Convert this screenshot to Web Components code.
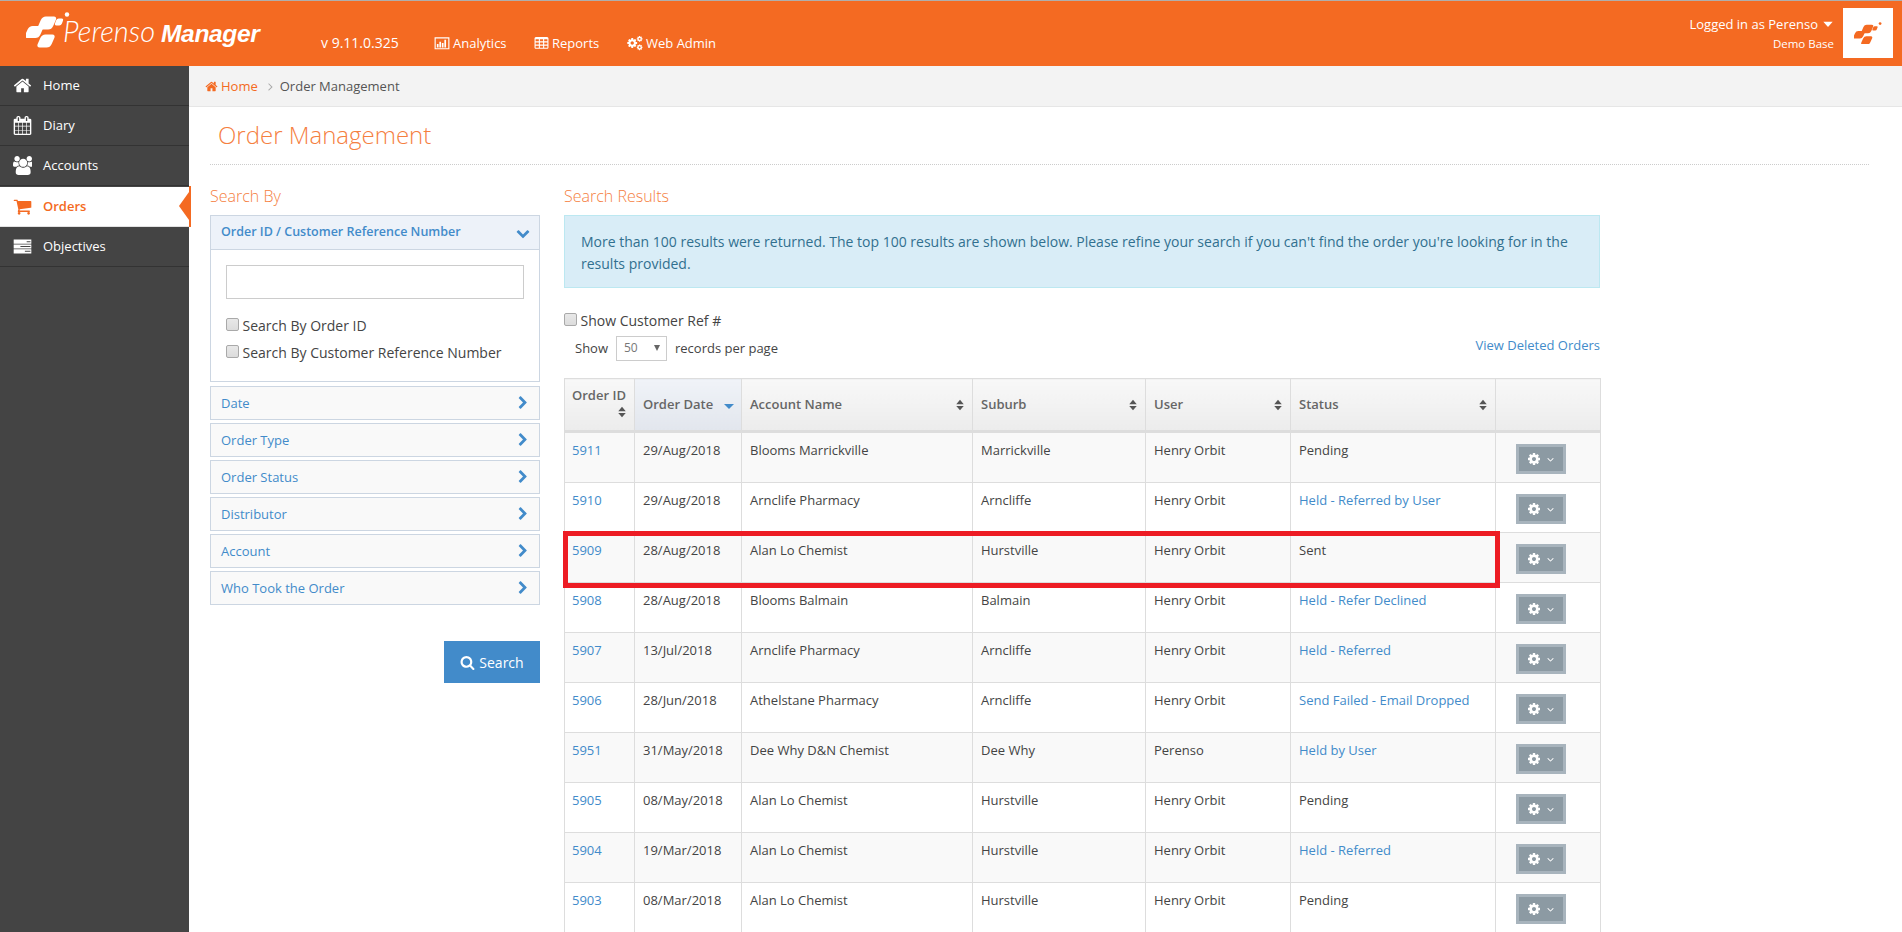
<!DOCTYPE html>
<html lang="en">
<head>
<meta charset="utf-8">
<title>Order Management</title>
<style>
  html, body { margin: 0; height: 100%; overflow: hidden; background: #fff; }
  body { font: 13px/18.5px "Open Sans", "Liberation Sans", sans-serif; color: #333; }
</style>
</head>
<body>
<pm-app></pm-app>
<script>
const COG = 'M1152 896q0-106-75-181t-181-75-181 75-75 181 75 181 181 75 181-75 75-181zm512-109v222q0 12-8 23t-20 13l-185 28q-19 54-39 91 35 50 107 138 10 12 10 25t-9 23q-27 37-99 108t-94 71q-12 0-26-9l-138-108q-44 23-91 38-16 136-29 186-7 28-36 28h-222q-14 0-24.500-8.500t-11.500-21.500l-28-184q-49-16-90-37l-141 107q-10 9-25 9-14 0-25-11-126-114-165-168-7-10-7-23 0-12 8-23 15-21 51-66.500t54-70.500q-27-50-41-99l-183-27q-13-2-21-12.500t-8-23.500v-222q0-12 8-23t19-13l186-28q14-46 39-92-40-57-107-138-10-12-10-24 0-10 9-23 26-36 98.500-107.500t94.500-71.500q13 0 26 10l138 107q44-23 91-38 16-136 29-186 7-28 36-28h222q14 0 24.500 8.500t11.500 21.500l28 184q49 16 90 37l142-107q9-9 24-9 13 0 25 10 129 119 165 170 7 8 7 22 0 12-8 23-15 21-51 66.500t-54 70.500q26 50 41 98l183 28q13 2 21 12.500t8 23.500z';

const ICONS = {
  home: '<path d="M1472 992v480q0 26-19 45t-45 19h-384v-384h-256v384h-384q-26 0-45-19t-19-45v-480q0-1 .5-3t.5-3l575-474 575 474q1 2 1 6zm223-69l-62 74q-8 9-21 11h-3q-13 0-21-7l-692-577-692 577q-12 8-24 7-13-2-21-11l-62-74q-8-10-7-23.500t11-21.500l719-599q32-26 76-26t76 26l244 204v-195q0-14 9-23t23-9h192q14 0 23 9t9 23v408l219 182q10 8 11 21.500t-7 23.500z"/>',
  calendar: '<path d="M192 1664h288v-288h-288v288zm352 0h320v-288h-320v288zm-352-352h288v-320h-288v320zm352 0h320v-320h-320v320zm-352-384h288v-288h-288v288zm736 736h320v-288h-320v288zm-384-736h320v-288h-320v288zm768 736h288v-288h-288v288zm-384-352h320v-320h-320v320zm-352-864v-288q0-13-9.500-22.500t-22.500-9.500h-64q-13 0-22.500 9.500t-9.500 22.500v288q0 13 9.500 22.500t22.500 9.500h64q13 0 22.500-9.500t9.500-22.500zm736 864h288v-320h-288v320zm-384-384h320v-288h-320v288zm384 0h288v-288h-288v288zm32-480v-288q0-13-9.500-22.500t-22.500-9.500h-64q-13 0-22.500 9.500t-9.500 22.500v288q0 13 9.500 22.500t22.500 9.500h64q13 0 22.500-9.500t9.500-22.500zm384-64v1280q0 52-38 90t-90 38h-1408q-52 0-90-38t-38-90v-1280q0-52 38-90t90-38h128v-96q0-66 47-113t113-47h64q66 0 113 47t47 113v96h384v-96q0-66 47-113t113-47h64q66 0 113 47t47 113v96h128q52 0 90 38t38 90z"/>',
  users: '<path d="M593 896q-162 5-265 128h-134q-82 0-138-40.500t-56-118.500q0-353 124-353 6 0 43.500 21t97.500 42.500 119 21.500q67 0 133-23-5 37-5 66 0 139 81 256zm1071 637q0 120-73 189.500t-194 69.500h-874q-121 0-194-69.500t-73-189.500q0-53 3.500-103.500t14-109 26.500-108.500 43-97.500 62-81 85.500-53.500 111.500-20q10 0 43 21.500t73 48 107 48 135 21.500 135-21.500 107-48 73-48 43-21.500q61 0 111.500 20t85.500 53.500 62 81 43 97.500 26.500 108.500 14 109 3.500 103.500zm-1024-1277q0 106-75 181t-181 75-181-75-75-181 75-181 181-75 181 75 75 181zm704 384q0 159-112.500 271.500t-271.500 112.500-271.500-112.500-112.500-271.500 112.500-271.500 271.500-112.500 271.500 112.500 112.500 271.500zm576 225q0 78-56 118.500t-138 40.500h-134q-103-123-265-128 81-117 81-256 0-29-5-66 66 23 133 23 59 0 119-21.500t97.500-42.500 43.500-21q124 0 124 353zm-128-609q0 106-75 181t-181 75-181-75-75-181 75-181 181-75 181 75 75 181z"/>',
  cart: '<path d="M704 1536q0 52-38 90t-90 38-90-38-38-90 38-90 90-38 90 38 38 90zm896 0q0 52-38 90t-90 38-90-38-38-90 38-90 90-38 90 38 38 90zm128-1088v512q0 24-16.500 42.500t-40.500 21.500l-1044 122q13 60 13 70 0 16-24 64h920q26 0 45 19t19 45-19 45-45 19h-1024q-26 0-45-19t-19-45q0-11 8-31.500t16-36 21.500-40 15.500-29.500l-177-823h-204q-26 0-45-19t-19-45 19-45 45-19h256q16 0 28.500 6.500t19.500 15.500 13 24.500 8 26 5.500 29.500 4.500 26h1201q26 0 45 19t19 45z"/>',
  tasks: '<path fill-rule="evenodd" d="M64 240h1664v400h-1664zM1290 390h360v100h-360zM64 696h1664v400h-1664zM700 846h950v100h-950zM64 1152h1664v400h-1664zM1120 1302h530v100h-530z"/>',
  chart: '<path fill-rule="evenodd" d="M64 256h1664v1344h-1664zM192 384v1088h1408v-1088zM320 1000h190v400h-190zM600 760h190v640h-190zM880 900h190v500h-190zM1160 520h190v880h-190z"/>',
  table: '<path d="M576 1376v-192q0-14-9-23t-23-9h-320q-14 0-23 9t-9 23v192q0 14 9 23t23 9h320q14 0 23-9t9-23zm0-384v-192q0-14-9-23t-23-9h-320q-14 0-23 9t-9 23v192q0 14 9 23t23 9h320q14 0 23-9t9-23zm512 384v-192q0-14-9-23t-23-9h-320q-14 0-23 9t-9 23v192q0 14 9 23t23 9h320q14 0 23-9t9-23zm-512-768v-192q0-14-9-23t-23-9h-320q-14 0-23 9t-9 23v192q0 14 9 23t23 9h320q14 0 23-9t9-23zm512 384v-192q0-14-9-23t-23-9h-320q-14 0-23 9t-9 23v192q0 14 9 23t23 9h320q14 0 23-9t9-23zm512 384v-192q0-14-9-23t-23-9h-320q-14 0-23 9t-9 23v192q0 14 9 23t23 9h320q14 0 23-9t9-23zm-512-768v-192q0-14-9-23t-23-9h-320q-14 0-23 9t-9 23v192q0 14 9 23t23 9h320q14 0 23-9t9-23zm512 384v-192q0-14-9-23t-23-9h-320q-14 0-23 9t-9 23v192q0 14 9 23t23 9h320q14 0 23-9t9-23zm0-384v-192q0-14-9-23t-23-9h-320q-14 0-23 9t-9 23v192q0 14 9 23t23 9h320q14 0 23-9t9-23zm128-320v1088q0 66-47 113t-113 47h-1344q-66 0-113-47t-47-113v-1088q0-66 47-113t113-47h1344q66 0 113 47t47 113z"/>',
  cog: `<path d="${COG}"/>`,
  cogs: `<g transform="translate(-60 250) scale(.72)"><path d="${COG}"/></g><g transform="translate(1040 60) scale(.42)"><path d="${COG}"/></g><g transform="translate(1040 1000) scale(.42)"><path d="${COG}"/></g>`,
  search: '<path d="M1216 832q0-185-131.500-316.500t-316.500-131.500-316.500 131.500-131.500 316.500 131.500 316.500 316.500 131.500 316.500-131.500 131.500-316.500zm512 832q0 52-38 90t-90 38q-54 0-90-38l-343-342q-179 124-399 124-143 0-273.500-55.500t-225-150-150-225-55.500-273.500 55.500-273.500 150-225 225-150 273.500-55.500 273.500 55.500 225 150 150 225 55.500 273.500q0 220-124 399l343 343q37 37 37 90z"/>',
  'chevron-right': '<path d="M1363 877l-742 742q-19 19-45 19t-45-19l-166-166q-19-19-19-45t19-45l531-531-531-531q-19-19-19-45t19-45l166-166q19-19 45-19t45 19l742 742q19 19 19 45t-19 45z"/>',
  'chevron-down': '<path d="M1683 808l-742 741q-19 19-45 19t-45-19l-742-741q-19-19-19-45.500t19-45.500l166-165q19-19 45-19t45 19l531 531 531-531q19-19 45-19t45 19l166 165q19 19 19 45.500t-19 45.500z"/>',
  'angle-down': '<path d="M1395 736q0 13-10 23l-466 466q-10 10-23 10t-23-10l-466-466q-10-10-10-23t10-23l50-50q10-10 23-10t23 10l393 393 393-393q10-10 23-10t23 10l50 50q10 10 10 23z"/>',
  'angle-right': '<path d="M1171 960q0 13-10 23l-466 466q-10 10-23 10t-23-10l-50-50q-10-10-10-23t10-23l393-393-393-393q-10-10-10-23t10-23l50-50q10-10 23-10t23 10l466 466q10 10 10 23z"/>',
  sort: '<path d="M896 224l480 560h-960zM896 1568l-480-560h960z"/>',
  'sort-desc': '<path d="M256 760h1280l-640 640z"/>',
  caret: '<path d="M196 560h1400l-700 780z"/>'
};

class PmIcon extends HTMLElement {
  connectedCallback() {
    const size = this.getAttribute('size') || 14;
    this.attachShadow({ mode: 'open' }).innerHTML = `
      <style>
        :host { display: inline-flex; flex: none; width: ${size}px; height: ${size}px; }
        svg { width: 100%; height: 100%; fill: currentColor; display: block; }
      </style>
      <svg viewBox="0 0 1792 1792">${ICONS[this.getAttribute('name')]}</svg>`;
  }
}
customElements.define('pm-icon', PmIcon);

// the four-blob Perenso mark, drawn in a 44x36 box
class PmMark extends HTMLElement {
  connectedCallback() {
    const w = this.getAttribute('width') || 44;
    this.attachShadow({ mode: 'open' }).innerHTML = `
      <style>
        :host { display: block; flex: none; width: ${w}px; }
        svg { display: block; width: 100%; fill: currentColor; }
      </style>
      <svg viewBox="0 0 44 36">
        <rect x="-7.500" y="-6" width="15" height="12" rx="3.500" transform="translate(8 20) skewX(-24)"/>
        <rect x="-7.500" y="-6.500" width="15" height="13" rx="3.500" transform="translate(21 11) skewX(-24)"/>
        <rect x="-7" y="-6.500" width="14" height="13" rx="3.500" transform="translate(20 29) skewX(-24)"/>
        <rect x="-3.500" y="-3.500" width="7" height="7" rx="2" transform="translate(33 10) skewX(-20)"/>
        <circle cx="41" cy="2.500" r="2.200"/>
      </svg>`;
  }
}
customElements.define('pm-mark', PmMark);

class PmHeader extends HTMLElement {
  connectedCallback() {
    this.attachShadow({ mode: 'open' }).innerHTML = `
      <style>
        :host { display: flex; align-items: stretch; height: 65px; background: #f46a22; color: #fff; border-top: 1px solid #b0aeac; }
        .brand { display: flex; align-items: flex-start; width: 321px; padding: 11px 0 0 26px; box-sizing: border-box; }
        .name { font: italic 300 29px/36px Lato, sans-serif; letter-spacing: 0; margin: 1px 0 0 -7px; white-space: nowrap; }
        .name b { font: italic 700 24.600px/36px "Liberation Sans", sans-serif; letter-spacing: -.4px; margin-left: 6px; }
        nav { display: flex; align-items: center; height: 18px; margin-top: 33px; font-size: 13px; }
        .ver { font-size: 14px; width: 113px; }
        a { display: inline-flex; align-items: center; gap: 3px; }
        a.analytics { width: 100px; } a.reports { width: 93px; }
        .user { margin-left: auto; text-align: right; padding: 14px 9px 0 0; }
        .who { display: flex; align-items: center; justify-content: flex-end; gap: 4px; line-height: 18px; }
        .base { font-size: 11.500px; line-height: 18px; margin-top: 2px; }
        .avatar { flex: none; width: 50px; height: 50px; margin: 7px 9px 0 0; background: #fff; color: #f46a22; display: flex; align-items: center; justify-content: center; }
      </style>
      <div class="brand"><pm-mark></pm-mark><div class="name">Perenso<b>Manager</b></div></div>
      <nav>
        <span class="ver">v 9.11.0.325</span>
        <a class="analytics"><pm-icon name="chart" size="16"></pm-icon>Analytics</a>
        <a class="reports"><pm-icon name="table" size="15"></pm-icon>Reports</a>
        <a><pm-icon name="cogs" size="16"></pm-icon>Web Admin</a>
      </nav>
      <div class="user">
        <div class="who">Logged in as Perenso <pm-icon name="caret" size="12"></pm-icon></div>
        <div class="base">Demo Base</div>
      </div>
      <div class="avatar"><pm-mark width="28"></pm-mark></div>`;
  }
}
customElements.define('pm-header', PmHeader);

class PmNavItem extends HTMLElement {
  connectedCallback() {
    const active = this.hasAttribute('active');
    this.attachShadow({ mode: 'open' }).innerHTML = `
      <style>
        :host { display: flex; align-items: center; position: relative; height: 40px; box-sizing: border-box; padding-left: 13px; gap: 12px; color: #fff; border-bottom: 1px solid #333; }
        :host([active]) { background: #fff; color: #f46a22; font-weight: 600; border-bottom-color: #e2e2e2; margin-top: 1px; }
        .strip { position: absolute; top: -1px; bottom: -1px; right: -2px; width: 2px; background: #f46a22; }
        .notch { position: absolute; top: 5px; right: 0; width: 0; height: 0; border: 14px solid transparent; border-left: 0; border-right: 10px solid #f46a22; }
        .ic { width: 18px; display: flex; justify-content: center; }
      </style>
      <span class="ic"><pm-icon name="${this.getAttribute('icon')}" size="19"></pm-icon></span>
      <slot></slot>
      ${active ? '<span class="strip"></span><span class="notch"></span>' : ''}`;
  }
}
customElements.define('pm-nav-item', PmNavItem);

class PmSidenav extends HTMLElement {
  connectedCallback() {
    this.attachShadow({ mode: 'open' }).innerHTML = `
      <style>
        :host { display: block; flex: none; width: 189px; background: #444; }
      </style>
      <slot></slot>`;
  }
}
customElements.define('pm-sidenav', PmSidenav);

class PmBreadcrumb extends HTMLElement {
  connectedCallback() {
    this.attachShadow({ mode: 'open' }).innerHTML = `
      <style>
        :host { display: flex; align-items: center; height: 40px; padding-left: 16px; background: #f3f3f3; border-bottom: 1px solid #e6e6e6; }
        .home { display: inline-flex; align-items: center; gap: 3px; color: #f46a22; }
        .sep { display: flex; margin: 0 3px 0 6px; color: #aaa; }
        .cur { color: #555; }
      </style>
      <span class="home"><pm-icon name="home" size="13"></pm-icon>Home</span>
      <span class="sep"><pm-icon name="angle-right" size="13"></pm-icon></span>
      <span class="cur">Order Management</span>`;
  }
}
customElements.define('pm-breadcrumb', PmBreadcrumb);

class PmCheck extends HTMLElement {
  connectedCallback() {
    this.attachShadow({ mode: 'open' }).innerHTML = `
      <style>
        :host { display: flex; align-items: center; gap: 3.500px; color: #444; font-size: 14px; line-height: 18px; }
        input { appearance: none; flex: none; width: 13px; height: 13px; margin: -3px 0 0; border: 1px solid #a9a9a9; border-radius: 2px; background: linear-gradient(#e8e8e8, #dcdcdc); box-sizing: border-box; }
      </style>
      <input type="checkbox"><slot></slot>`;
  }
}
customElements.define('pm-check', PmCheck);

class PmPanel extends HTMLElement {
  connectedCallback() {
    const open = this.hasAttribute('open');
    this.attachShadow({ mode: 'open' }).innerHTML = `
      <style>
        :host { display: block; border: 1px solid #ccd6e2; margin-bottom: 3px; background: #f9f9f9; }
        :host([open]) { background: #fff; margin-bottom: 4px; }
        .head { display: flex; align-items: center; justify-content: space-between; height: 32px; padding: 0 10px 0 10px; color: #428bca; font-size: 13px; }
        :host([open]) .head { height: 34px; background: #edf2f9; border-bottom: 1px solid #ccd6e2; font-weight: 600; font-size: 12.500px; padding-right: 9px; box-sizing: border-box; }
        .body { padding: 15px 15px 11px; }
        .head pm-icon { margin-right: -1px; }
        :host([open]) .head pm-icon { margin-right: 0; }
      </style>
      <div class="head"><span>${this.getAttribute('label')}</span><pm-icon name="${open ? 'chevron-down' : 'chevron-right'}" size="14"></pm-icon></div>
      ${open ? '<div class="body"><slot></slot></div>' : ''}`;
  }
}
customElements.define('pm-panel', PmPanel);

class PmSearchBy extends HTMLElement {
  connectedCallback() {
    this.attachShadow({ mode: 'open' }).innerHTML = `
      <style>
        :host { display: block; flex: none; width: 330px; }
        h3 { margin: 0 0 8px; font: 300 16px/22px "Open Sans", sans-serif; color: #f5803f; }
        .field { display: block; width: 100%; height: 34px; box-sizing: border-box; border: 1px solid #ccc; background: #fff; margin: 0 0 18px; }
        pm-check { margin-bottom: 8.500px; }
        .go { display: flex; justify-content: flex-end; margin-top: 36px; }
        button { display: inline-flex; align-items: center; justify-content: center; gap: 4px; width: 96px; height: 42px; border: 0; background: #428bca; color: #fff; font: 14px "Open Sans", sans-serif; padding: 0; }
      </style>
      <h3>Search By</h3>
      <pm-panel open label="Order ID / Customer Reference Number">
        <input class="field" type="text" aria-label="Search">
        <pm-check>Search By Order ID</pm-check>
        <pm-check>Search By Customer Reference Number</pm-check>
      </pm-panel>
      <pm-panel label="Date"></pm-panel>
      <pm-panel label="Order Type"></pm-panel>
      <pm-panel label="Order Status"></pm-panel>
      <pm-panel label="Distributor"></pm-panel>
      <pm-panel label="Account"></pm-panel>
      <pm-panel label="Who Took the Order"></pm-panel>
      <div class="go"><button><pm-icon name="search" size="15"></pm-icon>Search</button></div>`;
  }
}
customElements.define('pm-search-by', PmSearchBy);

const ORDERS = [
  ['5911', '29/Aug/2018', 'Blooms Marrickville', 'Marrickville', 'Henry Orbit', 'Pending', false],
  ['5910', '29/Aug/2018', 'Arnclife Pharmacy', 'Arncliffe', 'Henry Orbit', 'Held - Referred by User', true],
  ['5909', '28/Aug/2018', 'Alan Lo Chemist', 'Hurstville', 'Henry Orbit', 'Sent', false],
  ['5908', '28/Aug/2018', 'Blooms Balmain', 'Balmain', 'Henry Orbit', 'Held - Refer Declined', true],
  ['5907', '13/Jul/2018', 'Arnclife Pharmacy', 'Arncliffe', 'Henry Orbit', 'Held - Referred', true],
  ['5906', '28/Jun/2018', 'Athelstane Pharmacy', 'Arncliffe', 'Henry Orbit', 'Send Failed - Email Dropped', true],
  ['5951', '31/May/2018', 'Dee Why D&amp;N Chemist', 'Dee Why', 'Perenso', 'Held by User', true],
  ['5905', '08/May/2018', 'Alan Lo Chemist', 'Hurstville', 'Henry Orbit', 'Pending', false],
  ['5904', '19/Mar/2018', 'Alan Lo Chemist', 'Hurstville', 'Henry Orbit', 'Held - Referred', true],
  ['5903', '08/Mar/2018', 'Alan Lo Chemist', 'Hurstville', 'Henry Orbit', 'Pending', false]
];

class PmOrdersTable extends HTMLElement {
  connectedCallback() {
    const rows = ORDERS.map(o => `
      <tr>
        <td class="id"><a>${o[0]}</a></td><td>${o[1]}</td><td>${o[2]}</td><td>${o[3]}</td><td>${o[4]}</td>
        <td>${o[6] ? `<a>${o[5]}</a>` : o[5]}</td>
        <td class="act"><span class="gear"><pm-icon name="cog" size="14"></pm-icon><pm-icon name="angle-down" size="11"></pm-icon></span></td>
      </tr>`).join('');
    const sort = '<pm-icon name="sort" size="14"></pm-icon>';
    this.attachShadow({ mode: 'open' }).innerHTML = `
      <style>
        :host { display: block; position: relative; }
        table { border-collapse: collapse; table-layout: fixed; width: 1036px; }
        th, td { border: 1px solid #ddd; padding: 8px; text-align: left; vertical-align: top; color: #444; font-weight: 400; }
        th { height: 53px; box-sizing: border-box; padding: 0 8px; vertical-align: middle; font-weight: 600; color: #666; background: linear-gradient(#f8f8f8, #ececec); border-bottom: 3px solid #ddd; }
        th.sorted { background: linear-gradient(#f0f3f8, #e2e6ed); }
        th div { display: flex; align-items: center; justify-content: space-between; }
        th div pm-icon { margin-right: -3px; color: #555; }
        th.sorted pm-icon { color: #428bca; }
        th.stack { padding: 0 8px 0 7px; }
        td.id { padding-left: 7px; }
        th.stack div { display: block; text-align: right; }
        th.stack span { display: block; text-align: left; white-space: nowrap; }
        th.stack pm-icon { margin: 0 -3px -4px 0; }
        td { height: 33px; }
        tbody tr:nth-child(odd) td { background: #f9f9f9; }
        a { color: #428bca; }
        td.act { padding: 11px 8px 0 20px; height: 38px; }
        .gear { display: flex; align-items: center; justify-content: center; gap: 4px; width: 50px; height: 30px; box-sizing: border-box; border: 3px solid #a8b4bd; background: #8c9aa3; color: #fff; }
        .mark { position: absolute; left: -1px; top: 153px; width: 937px; height: 57px; box-sizing: border-box; border: 5px solid #ed1c24; pointer-events: none; }
      </style>
      <table>
        <colgroup><col style="width:70px"><col style="width:107px"><col style="width:231px"><col style="width:173px"><col style="width:145px"><col style="width:205px"><col style="width:105px"></colgroup>
        <thead><tr>
          <th class="stack"><div><span>Order ID</span>${sort}</div></th>
          <th class="sorted"><div>Order Date<pm-icon name="sort-desc" size="14"></pm-icon></div></th>
          <th><div>Account Name${sort}</div></th>
          <th><div>Suburb${sort}</div></th>
          <th><div>User${sort}</div></th>
          <th><div>Status${sort}</div></th>
          <th></th>
        </tr></thead>
        <tbody>${rows}</tbody>
      </table>
      <div class="mark"></div>`;
  }
}
customElements.define('pm-orders-table', PmOrdersTable);

class PmResults extends HTMLElement {
  connectedCallback() {
    this.attachShadow({ mode: 'open' }).innerHTML = `
      <style>
        :host { display: block; flex: none; width: 1036px; }
        h3 { margin: 0 0 8px; font: 300 16px/22px "Open Sans", sans-serif; color: #f5803f; }
        .alert { box-sizing: border-box; height: 73px; padding: 15px 16px; background: #d9edf7; border: 1px solid #bce8f1; color: #31708f; font-size: 14px; line-height: 21.500px; }
        pm-check { margin-top: 24px; }
        .bar { display: flex; align-items: center; justify-content: space-between; height: 26px; margin: 5px 0 17px; padding-left: 11px; }
        .len { display: flex; align-items: center; gap: 8px; color: #444; }
        .sel { display: flex; align-items: center; justify-content: space-between; box-sizing: border-box; width: 51px; height: 25px; border: 1px solid #ccc; padding: 0 6px 0 7px; color: #777; font-size: 12px; }
        .arr { width: 0; height: 0; border: 3.500px solid transparent; border-top: 6px solid #666; border-bottom: 0; }
        a { color: #428bca; font-size: 13px; padding-bottom: 5px; }
      </style>
      <h3>Search Results</h3>
      <div class="alert">More than 100 results were returned. The top 100 results are shown below. Please refine your search if you can't find the order you're looking for in the results provided.</div>
      <pm-check>Show Customer Ref #</pm-check>
      <div class="bar">
        <div class="len">Show <span class="sel">50<span class="arr"></span></span> records per page</div>
        <a>View Deleted Orders</a>
      </div>
      <pm-orders-table></pm-orders-table>`;
  }
}
customElements.define('pm-results', PmResults);

class PmApp extends HTMLElement {
  connectedCallback() {
    this.attachShadow({ mode: 'open' }).innerHTML = `
      <style>
        :host { display: flex; flex-direction: column; height: 932px; overflow: hidden; }
        .shell { display: flex; flex: 1; min-height: 0; }
        main { flex: 1; min-width: 0; }
        .title { margin: 0 33px 0 21px; height: 57px; border-bottom: 1px dotted #ccc; box-sizing: content-box; }
        h1 { margin: 0; padding: 11px 0 0 8px; font: 300 24px/33px "Open Sans", sans-serif; color: #f5803f; }
        .cols { display: flex; gap: 24px; padding: 20px 0 0 21px; }
      </style>
      <pm-header></pm-header>
      <div class="shell">
        <pm-sidenav>
          <pm-nav-item icon="home">Home</pm-nav-item>
          <pm-nav-item icon="calendar">Diary</pm-nav-item>
          <pm-nav-item icon="users">Accounts</pm-nav-item>
          <pm-nav-item icon="cart" active>Orders</pm-nav-item>
          <pm-nav-item icon="tasks">Objectives</pm-nav-item>
        </pm-sidenav>
        <main>
          <pm-breadcrumb></pm-breadcrumb>
          <div class="title"><h1>Order Management</h1></div>
          <div class="cols"><pm-search-by></pm-search-by><pm-results></pm-results></div>
        </main>
      </div>`;
  }
}
customElements.define('pm-app', PmApp);
</script>
</body>
</html>
